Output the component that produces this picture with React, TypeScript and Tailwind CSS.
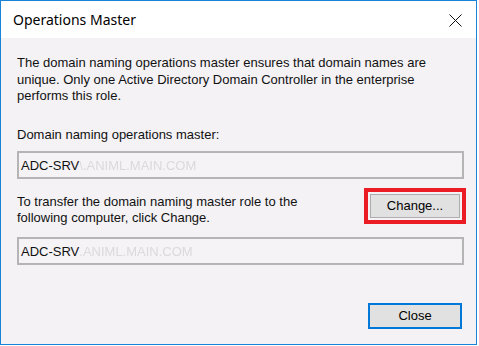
import React from "react";

function Field({ tail }: { tail: string }) {
  return (
    <div className="h-[28px] w-[447px] border-2 border-[#b5b5b5] bg-[#f5f3f6] flex items-center pl-[2px] text-[13px] leading-none text-[#111]">
      <span>ADC-SRV</span>
      <span className="text-[#dadada] blur-[0.6px]">{tail}</span>
    </div>
  );
}

export default function App() {
  return (
    <div
      className="w-[477px] h-[345px] border border-[#1883d7] bg-[#f4f2f5] flex flex-col"
      style={{ fontFamily: '"Liberation Sans", Arial, sans-serif' }}
    >
      <div className="h-[37px] bg-white flex items-center justify-between pl-[12px] pr-[14px]">
        <span
          className="text-[14px] text-black"
          style={{ fontFamily: '"Noto Sans", "Open Sans", sans-serif' }}
        >
          Operations Master
        </span>
        <svg width="13" height="13" viewBox="0 0 13 13" className="mt-[1px]">
          <path d="M0.5 0.5 L12.5 12.5 M12.5 0.5 L0.5 12.5" stroke="#111" strokeWidth="1" />
        </svg>
      </div>
      <div className="flex flex-col ml-[16px] w-[447px] text-[13px] text-[#111]">
        <p className="mt-[17px] leading-[16.5px]">
          The domain naming operations master ensures that domain names are
          <br />
          unique. Only one Active Directory Domain Controller in the enterprise
          <br />
          performs this role.
        </p>
        <p className="mt-[22px] leading-[16.5px]">Domain naming operations master:</p>
        <div className="mt-[8px]">
          <Field tail="\.ANIML.MAIN.COM" />
        </div>
        <div className="mt-[9px] flex justify-between items-start">
          <p className="mt-[6px] leading-[16px]">
            To transfer the domain naming master role to the
            <br />
            following computer, click Change.
          </p>
          <div className="-mr-[2px] border-4 border-[#ec1c24] p-[2px]">
            <div className="w-[90px] h-[24px] border border-[#adadad] bg-[#e1e1e1] flex items-center justify-center text-[13px] text-black">
              Change...
            </div>
          </div>
        </div>
        <div className="mt-[11px]">
          <Field tail=".ANIML.MAIN.COM" />
        </div>
        <div className="mt-[38px] flex justify-end pr-[2px]">
          <div className="w-[94px] h-[26px] border-2 border-[#0078d7] bg-[#e1e1e1] flex items-center justify-center text-[13px] text-black">
            Close
          </div>
        </div>
      </div>
    </div>
  );
}
